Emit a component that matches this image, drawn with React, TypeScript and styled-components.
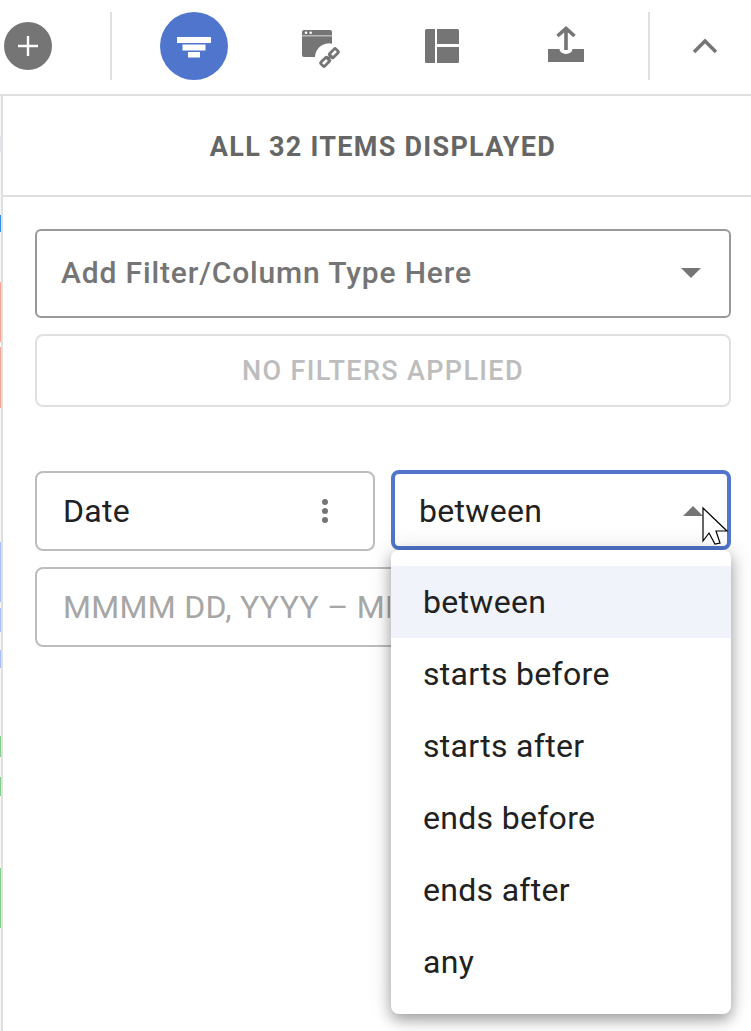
import React from "react";
import styled, { createGlobalStyle } from "styled-components";

const Global = createGlobalStyle`
  html, body { margin: 0; padding: 0; background: #fff; }
  body { font-family: Roboto, "Liberation Sans", sans-serif; width: 751px; height: 1031px; overflow: hidden; }
`;

const Page = styled.div`display:flex;flex-direction:column;width:751px;height:1031px;overflow:hidden;`;
const Toolbar = styled.div`display:flex;align-items:center;height:92px;padding:0 0 2px 4px;border-bottom:2px solid #e0e0e0;flex:none;`;
const AddButton = styled.div`width:48px;height:48px;border-radius:50%;background:#757575;display:flex;align-items:center;justify-content:center;flex:none;`;
const Divider = styled.div<{ $before: number; $after: number }>`width:2px;height:68px;background:#e0e0e0;flex:none;margin:0 ${p => p.$after}px 0 ${p => p.$before}px;`;
const ToolGroup = styled.div`display:flex;gap:56px;`;
const Tool = styled.div<{ $active?: boolean }>`width:68px;height:68px;border-radius:50%;display:flex;align-items:center;justify-content:center;background:${p => (p.$active ? "#4f75cd" : "transparent")};`;
const Body = styled.div`display:flex;flex:1;min-height:0;`;
const Stripe = styled.div`width:1px;flex:none;display:flex;flex-direction:column;background:#f6f6f6;`;
const Segment = styled.div<{ $top: number; $h: number; $c: string }>`margin-top:${p => p.$top}px;height:${p => p.$h}px;background:${p => p.$c};flex:none;`;
const Panel = styled.div`flex:1;border-left:2px solid #e0e0e0;display:flex;flex-direction:column;min-width:0;`;
const Header = styled.div`height:101px;box-sizing:border-box;padding:3px 0 0 12px;border-bottom:2px solid #e0e0e0;display:flex;align-items:center;justify-content:center;font-size:27px;font-weight:700;color:#666;letter-spacing:1.27px;flex:none;line-height:1;`;
const Content = styled.div`padding:32px 20px 0 32px;display:flex;flex-direction:column;`;
const AddSelect = styled.div`height:89px;box-sizing:border-box;border:2px solid #999;border-radius:6px;display:flex;align-items:center;justify-content:space-between;padding:0 28px 2px 24px;font-size:30px;font-weight:500;color:#757575;letter-spacing:.85px;`;
const Arrow = styled.div<{ $up?: boolean }>`width:0;height:0;border-left:10px solid transparent;border-right:10px solid transparent;${p => (p.$up ? "border-bottom:10px solid #757575;" : "border-top:10px solid #757575;")}`;
const NoFilters = styled.div`margin-top:16px;height:73px;box-sizing:border-box;border:2px solid #e0e0e0;border-radius:8px;display:flex;align-items:center;justify-content:center;font-size:27px;font-weight:500;color:#bdbdbd;letter-spacing:1.35px;`;
const Row = styled.div`position:relative;margin-top:64px;display:grid;grid-template-columns:340px 340px;column-gap:16px;`;
const Field = styled.div`height:80px;box-sizing:border-box;border:2px solid #bdbdbd;border-radius:8px;display:flex;align-items:center;justify-content:space-between;padding:0 45px 0 26px;font-size:32px;color:#212121;letter-spacing:.3px;background:#fff;`;
const FocusedField = styled(Field)`margin-top:-1px;border:4px solid #4f75cd;padding:2px 24px 0 24px;`;
const Dots = styled.div`display:flex;flex-direction:column;gap:3px;`;
const Dot = styled.div`width:6px;height:6px;border-radius:50%;background:#757575;`;
const DateRange = styled.div`grid-column:1 / -1;margin-top:16px;height:80px;box-sizing:border-box;border:2px solid #bdbdbd;border-radius:8px;display:flex;align-items:center;padding:0 26px;font-size:32px;color:#a6a6a6;letter-spacing:.3px;`;
const DateText = styled.span`width:327px;overflow:hidden;white-space:nowrap;flex:none;`;
const Menu = styled.div`position:absolute;left:356px;top:79px;width:340px;height:464px;box-sizing:border-box;padding:16px 0;background:#fff;border-radius:8px;box-shadow:0 6px 14px rgba(0,0,0,.32),0 0 26px rgba(0,0,0,.14);`;
const MenuItem = styled.div<{ $selected?: boolean }>`height:72px;display:flex;align-items:center;padding:0 32px;font-size:32px;color:#212121;letter-spacing:.3px;background:${p => (p.$selected ? "#f0f3fa" : "transparent")};`;
const Cursor = styled.svg`position:absolute;left:667px;top:36px;overflow:visible;`;
const LinkIcon = styled.svg`margin:6px 0 0 6px;flex:none;overflow:visible;`;
const UploadIcon = styled.svg`margin-bottom:4px;flex:none;`;
const FilterIcon = styled.svg`flex:none;`;

const segments = [
  { top: 40, h: 16, c: "#e4e7ec" },
  { top: 63, h: 17, c: "#3a8ee0" },
  { top: 50, h: 60, c: "#f2a595" },
  { top: 5, h: 61, c: "#f2a595" },
  { top: 134, h: 60, c: "#a9bdfa" },
  { top: 6, h: 24, c: "#a9bdfa" },
  { top: 18, h: 18, c: "#a9bdfa" },
  { top: 68, h: 21, c: "#86cd8c" },
  { top: 20, h: 19, c: "#86cd8c" },
  { top: 72, h: 60, c: "#86cd8c" },
];

const options = ["between", "starts before", "starts after", "ends before", "ends after", "any"];

export default function App() {
  return (
    <Page>
      <Global />
      <Toolbar>
        <AddButton>
          <svg width="22" height="22" viewBox="0 0 22 22"><path d="M11 1v20M1 11h20" stroke="#fff" strokeWidth="2.4" /></svg>
        </AddButton>
        <Divider $before={58} $after={48} />
        <ToolGroup>
          <Tool $active>
            <FilterIcon width="34" height="24" viewBox="0 0 34 24" fill="#fff"><path d="M0 3h34v6H0zM5.500 10.500h23v6h-23zM11 18h12v5.500H11z" /></FilterIcon>
          </Tool>
          <Tool>
            <LinkIcon width="38" height="38" viewBox="0 0 38 38">
              <path fill="#757575" d="M2 0h26a2 2 0 0 1 2 2v3.500H0V2a2 2 0 0 1 2-2zM0 6.300h30v7.400A14 14 0 0 0 13 27H2a2 2 0 0 1-2-2z" />
              <circle cx="4" cy="2.700" r="1.300" fill="#fff" />
              <circle cx="8.700" cy="2.700" r="1.300" fill="#fff" />
              <g fill="none" stroke="#757575" strokeWidth="2.800" transform="rotate(-45 27.500 27.500)">
                <rect x="17" y="24.800" width="8.800" height="5.400" rx="1" />
                <rect x="29.200" y="24.800" width="8.800" height="5.400" rx="1" />
                <path d="M24 27.500h7" />
              </g>
            </LinkIcon>
          </Tool>
          <Tool>
            <svg width="34" height="34" viewBox="0 0 34 34" fill="#757575"><path d="M1.500 0H10v34H1.500A1.500 1.500 0 0 1 0 32.500V1.500A1.500 1.500 0 0 1 1.500 0zM12 0h20.500A1.500 1.500 0 0 1 34 1.500V15H12zM12 18h22v14.500a1.500 1.500 0 0 1-1.500 1.500H12z" /></svg>
          </Tool>
          <Tool>
            <UploadIcon width="36" height="36" viewBox="0 0 36 36" fill="#757575">
              <path d="M0 23h11.500a6.500 5 0 0 0 13 0H36v13H0z" />
              <path d="M18 3v21M9.500 10 18 2.500 26.500 10" fill="none" stroke="#757575" strokeWidth="3.600" />
            </UploadIcon>
          </Tool>
        </ToolGroup>
        <Divider $before={48} $after={21} />
        <Tool>
          <svg width="26" height="16" viewBox="0 0 26 16"><path d="M2 14 13 3l11 11" fill="none" stroke="#757575" strokeWidth="3.400" /></svg>
        </Tool>
      </Toolbar>
      <Body>
        <Stripe>{segments.map((s, i) => <Segment key={i} $top={s.top} $h={s.h} $c={s.c} />)}</Stripe>
        <Panel>
          <Header>ALL 32 ITEMS DISPLAYED</Header>
          <Content>
            <AddSelect>Add Filter/Column Type Here<Arrow /></AddSelect>
            <NoFilters>NO FILTERS APPLIED</NoFilters>
            <Row>
              <Field>Date<Dots><Dot /><Dot /><Dot /></Dots></Field>
              <FocusedField>between<Arrow $up /></FocusedField>
              <DateRange><DateText>MMMM DD, YYYY – MMMM DD, YYYY</DateText></DateRange>
              <Menu>
                {options.map((o, i) => <MenuItem key={o} $selected={i === 0}>{o}</MenuItem>)}
              </Menu>
              <Cursor width="26" height="38" viewBox="0 0 26 38">
                <path d="M1 1v33l6-8 6 11 5-1-4-12h11z" fill="#fff" stroke="#000" strokeWidth="1.200" />
              </Cursor>
            </Row>
          </Content>
        </Panel>
      </Body>
    </Page>
  );
}
